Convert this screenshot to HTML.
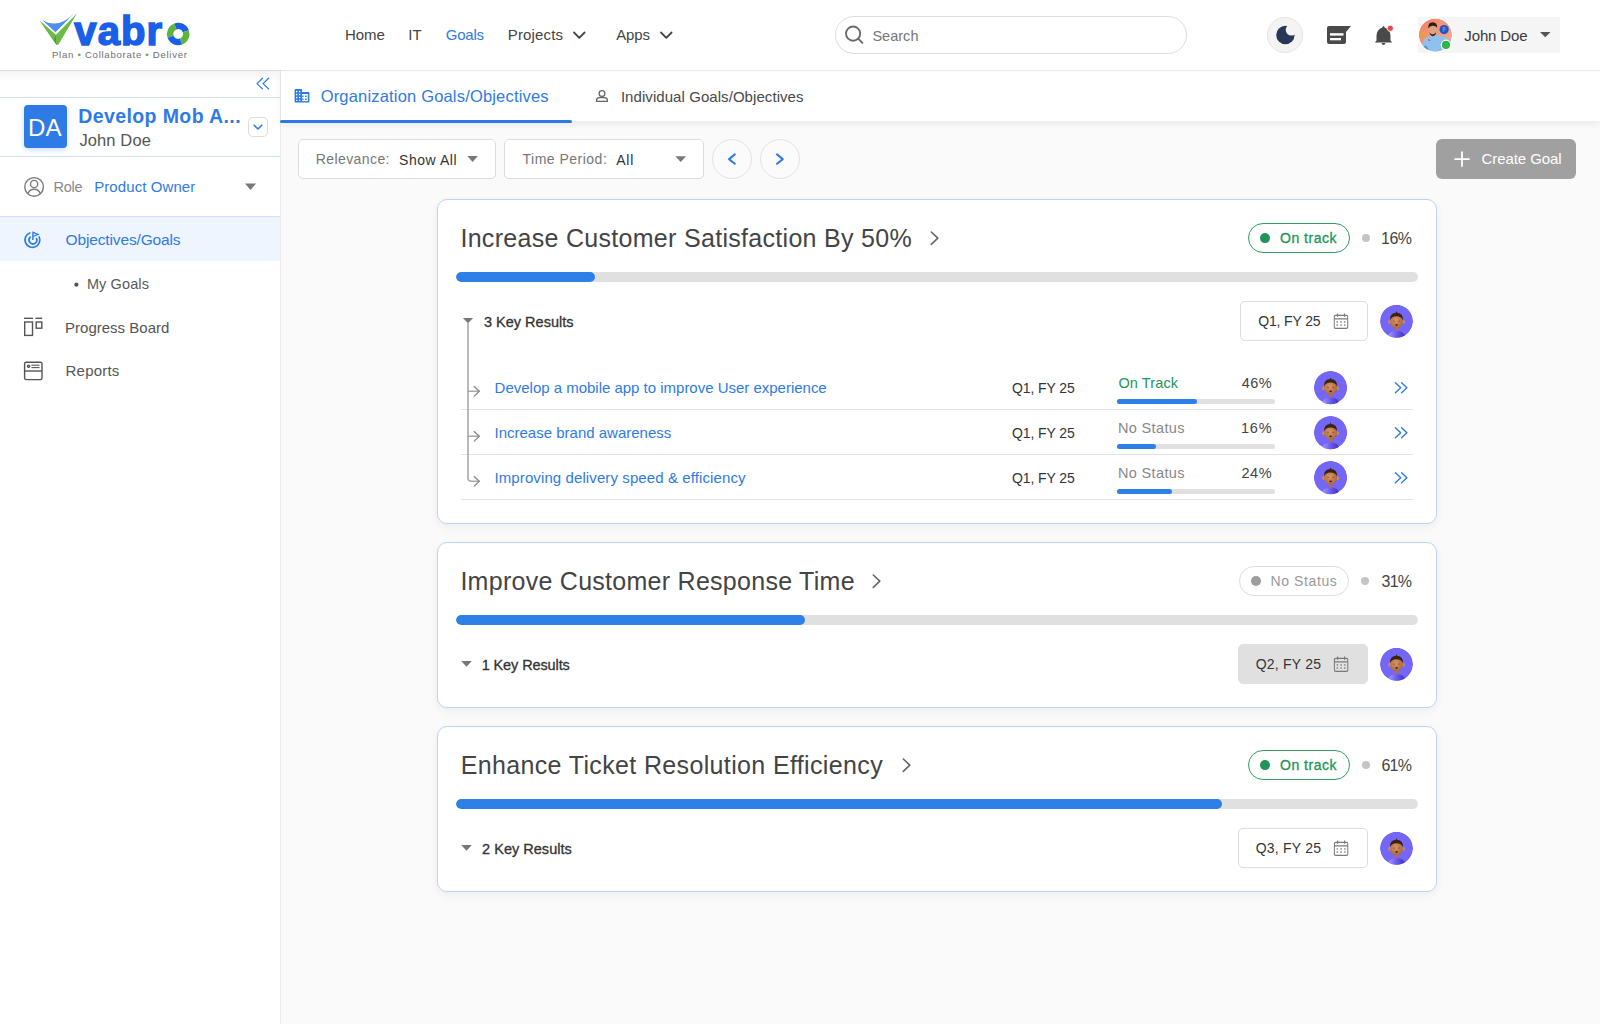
<!DOCTYPE html>
<html><head><meta charset="utf-8"><title>Goals</title>
<style>
*{margin:0;padding:0;box-sizing:border-box;}
html,body{width:1600px;height:1024px;overflow:hidden;background:#fafafa;font-family:"Liberation Sans",sans-serif;}
.a{position:absolute;}
.t{position:absolute;line-height:0;white-space:nowrap;z-index:6;}
svg{position:absolute;overflow:visible;}
#hdr{position:absolute;left:0;top:0;width:1600px;height:70px;background:#fff;box-shadow:0 1px 1px rgba(0,0,0,0.09);z-index:3;}
#side{position:absolute;left:0;top:70px;width:281px;height:954px;background:#fff;border-right:1px solid #ebebeb;z-index:1;}
#tabs{position:absolute;left:281px;top:70px;width:1319px;height:51px;background:#fff;box-shadow:0 3px 7px rgba(0,0,0,0.07);z-index:2;}
.card{position:absolute;left:437px;width:1000px;background:#fff;border:1px solid #bcd3f2;border-radius:10px;box-shadow:0 3px 8px rgba(0,0,0,0.06);}
.bar{position:absolute;left:456px;width:962px;height:10px;border-radius:5px;background:#e0e0e0;overflow:hidden;}
.bar i{position:absolute;left:0;top:0;height:10px;border-radius:5px;background:#2f7fe8;}
.mbar{position:absolute;left:1117px;width:158px;height:5px;border-radius:3px;background:#e0e0e0;}
.mbar i{position:absolute;left:0;top:0;height:5px;border-radius:3px;background:#2f7fe8;}
.box{position:absolute;background:#fff;border:1px solid #dcdcdc;border-radius:5px;}
.pill{position:absolute;height:30px;border-radius:15px;background:#fff;}
.dot{position:absolute;border-radius:50%;}
.sep{position:absolute;left:461px;width:952px;height:1px;background:#e2e2e2;}

</style></head><body>
<div id="hdr"></div>
<div id="side"></div>
<div id="tabs"></div>
<div class="a" style="left:0;top:70px;width:280px;height:12px;background:linear-gradient(rgba(0,0,0,0.045),rgba(0,0,0,0));z-index:2"></div>
<!-- header boxes -->
<div class="a" style="left:835px;top:16px;width:352px;height:38px;border:1px solid #dedede;border-radius:19px;background:#fff;z-index:4"></div>
<div class="a" style="left:1267px;top:17px;width:36px;height:36px;border:1px solid #e3e3e3;border-radius:50%;background:#f4f4f5;z-index:4"></div>
<div class="a" style="left:1418px;top:17px;width:142px;height:36px;background:#f5f5f5;z-index:4"></div>
<!-- sidebar -->
<div class="a" style="left:0;top:97px;width:280px;height:1px;background:#cfe0fa;z-index:2"></div>
<div class="a" style="left:24px;top:105px;width:43px;height:43px;background:#2f7be6;border-radius:4px;box-shadow:0 2px 5px rgba(47,123,230,0.25);z-index:2"></div>
<div class="a" style="left:248px;top:117px;width:20px;height:20px;border:1px solid #dcdcdc;border-radius:5px;background:#fff;z-index:2"></div>
<div class="a" style="left:0;top:156px;width:280px;height:1px;background:#cfe0fa;z-index:2"></div>
<div class="a" style="left:0;top:216px;width:280px;height:1px;background:#cfe0fa;z-index:2"></div>
<div class="a" style="left:0;top:217px;width:280px;height:44px;background:#eef5fe;z-index:2"></div>
<!-- tab underline -->
<div class="a" style="left:280px;top:119.5px;width:292px;height:3px;background:#2f7be6;border-radius:2px;z-index:4"></div>
<!-- filters -->
<div class="box" style="left:298px;top:139px;width:198px;height:40px;"></div>
<div class="box" style="left:504px;top:139px;width:200px;height:40px;"></div>
<div class="a" style="left:712px;top:139px;width:40px;height:40px;border:1px solid #e3e3e3;border-radius:50%;background:#fbfbfb"></div>
<div class="a" style="left:760px;top:139px;width:40px;height:40px;border:1px solid #e3e3e3;border-radius:50%;background:#fbfbfb"></div>
<div class="a" style="left:1436px;top:139px;width:140px;height:40px;border-radius:6px;background:#a0a0a0"></div>
<!-- cards -->
<div class="card" style="top:199px;height:325px"></div>
<div class="card" style="top:542px;height:166px"></div>
<div class="card" style="top:726px;height:166px"></div>
<!-- pills -->
<div class="pill" style="left:1248px;top:223px;width:102px;border:1px solid #2e9d5f"></div>
<div class="pill" style="left:1239px;top:566px;width:110px;border:1px solid #dddddd"></div>
<div class="pill" style="left:1248px;top:750px;width:102px;border:1px solid #2e9d5f"></div>
<!-- progress bars -->
<div class="bar" style="top:272px"><i style="width:139px"></i></div>
<div class="bar" style="top:615px"><i style="width:349px"></i></div>
<div class="bar" style="top:799px"><i style="width:766px"></i></div>
<!-- date boxes -->
<div class="box" style="left:1240px;top:301px;width:128px;height:40px"></div>
<div class="box" style="left:1238px;top:644px;width:130px;height:40px;background:#e0e0e0;border-color:#e0e0e0"></div>
<div class="box" style="left:1238px;top:828px;width:130px;height:40px"></div>
<!-- row separators & mini bars -->
<div class="sep" style="top:409px"></div>
<div class="sep" style="top:454px"></div>
<div class="sep" style="top:499px"></div>
<div class="mbar" style="top:398.5px"><i style="width:80px"></i></div>
<div class="mbar" style="top:443.5px"><i style="width:39px"></i></div>
<div class="mbar" style="top:488.5px"><i style="width:55px"></i></div>
<svg style="left:0;top:0;z-index:5" width="1600" height="1024" viewBox="0 0 1600 1024">
<defs>
  <linearGradient id="body" x1="0" x2="1" y1="0" y2="0"><stop offset="0" stop-color="#a99bff"/><stop offset="0.5" stop-color="#6a5cf0"/><stop offset="1" stop-color="#3c2fb8"/></linearGradient>
  <radialGradient id="face" cx="0.45" cy="0.45" r="0.6"><stop offset="0" stop-color="#d99766"/><stop offset="1" stop-color="#a8653b"/></radialGradient>
  <clipPath id="avc"><circle cx="17" cy="17" r="17"/></clipPath>
  <symbol id="av" viewBox="0 0 34 34">
    <g clip-path="url(#avc)">
      <circle cx="17" cy="17" r="17" fill="#7466f7"/>
      <ellipse cx="17" cy="33.6" rx="9" ry="6.6" fill="url(#body)"/>
      <rect x="15.2" y="22" width="3.6" height="5" fill="#b86d3e"/>
      <circle cx="10.3" cy="17.6" r="2" fill="#d08a55"/>
      <circle cx="23.7" cy="17.6" r="2" fill="#d08a55"/>
      <ellipse cx="17" cy="16.8" rx="6.6" ry="7.4" fill="url(#face)"/>
      <path d="M10.3,15.8 Q10,8.4 17,8.2 Q24,8.4 23.7,15.8 Q22,12 17,11.8 Q12,12 10.3,15.8 Z" fill="#3a2214"/>
      <path d="M16.3,8.4 L17.1,6.4 L17.9,8.4" fill="#3a2214"/>
      <path d="M15.6,20.4 Q17.1,19.6 18.6,20.4 Q18,21.8 17.1,21.8 Q16.2,21.8 15.6,20.4 Z" fill="#3a1a10"/>
      <path d="M13.5,17 Q14.5,16.4 15.5,17" stroke="#5a2e18" stroke-width="0.5" fill="none"/><path d="M18.7,17 Q19.7,16.4 20.7,17" stroke="#5a2e18" stroke-width="0.5" fill="none"/>
    </g>
  </symbol>
  <marker id="none"/>
  <mask id="moonm"><rect x="1260" y="10" width="50" height="50" fill="#fff"/><circle cx="1291.5" cy="29.8" r="5.8" fill="#000"/></mask>
  <linearGradient id="salmon" x1="0" y1="0" x2="1" y2="1"><stop offset="0" stop-color="#f07e60"/><stop offset="1" stop-color="#f5b39a"/></linearGradient>
  <clipPath id="uav"><circle cx="1435.4" cy="35" r="16.6"/></clipPath>
</defs>

<!-- ===== LOGO ===== -->
<path d="M42.2,19.9 Q58,29.8 74.1,13.3 L55.5,32.2 Z" fill="#4f8ef0"/>
<path d="M40.1,21.1 L55.8,34.9 L57.2,44.7 L56.3,44.7 Z" fill="#4f9a34"/>
<path d="M40.1,21.1 L55.8,34.9 L53.5,40.5 Z" fill="#6cbb45"/>
<path d="M55.8,34.9 L77,13.3 L58.3,44.7 L56.3,44.7 Z" fill="#6cbb45"/>
<text x="74.3" y="44.6" font-family="Liberation Sans" font-weight="700" font-size="40" fill="#1a5fe8" stroke="#1a5fe8" stroke-width="1.5" letter-spacing="1.1">vabr</text>
<g fill="none" stroke-width="6.4">
  <path d="M170.59,36.77 A8.1,8.1 0 0 1 175.43,26.39" stroke="#5db53f"/>
  <path d="M175.43,26.39 A8.1,8.1 0 0 1 185.81,31.23" stroke="#1a5fe8"/>
  <path d="M185.81,31.23 A8.1,8.1 0 0 1 180.97,41.61" stroke="#5db53f"/>
  <path d="M180.97,41.61 A8.1,8.1 0 0 1 170.59,36.77" stroke="#1a5fe8"/>
</g>
<text x="52" y="57.5" font-family="Liberation Sans" font-size="9.6" fill="#6f6f6f" letter-spacing="0.72">Plan <tspan fill="#5db53f">•</tspan> Collaborate <tspan fill="#5db53f">•</tspan> Deliver</text>

<!-- ===== HEADER ICONS ===== -->
<g fill="none" stroke="#444" stroke-width="1.8" stroke-linecap="round" stroke-linejoin="round">
  <polyline points="574,32.5 579.3,37.8 584.6,32.5"/>
  <polyline points="661,32.5 666.3,37.8 671.6,32.5"/>
</g>
<g fill="none" stroke="#6b6b6b" stroke-width="1.9" stroke-linecap="round">
  <circle cx="853.1" cy="33.6" r="7.1"/>
  <line x1="858.4" y1="38.9" x2="862.4" y2="42.9"/>
</g>
<circle cx="1285.4" cy="35" r="9.2" fill="#283758" mask="url(#moonm)"/>
<path d="M1329,26 L1351,26 L1346,32 L1346,42 Q1346,44 1344,44 L1329,44 Q1327,44 1327,42 L1327,28 Q1327,26 1329,26 Z" fill="#4a4a4a"/>
<rect x="1330" y="33.2" width="13.5" height="2.4" fill="#fff"/>
<rect x="1330" y="38" width="11" height="2.3" fill="#fff"/>
<path d="M1383.5,26 Q1384.5,26 1384.6,27.5 Q1390.5,29.5 1390.5,36 L1390.5,40.5 L1392.2,42.5 L1374.8,42.5 L1376.5,40.5 L1376.5,36 Q1376.5,29.5 1382.4,27.5 Q1382.5,26 1383.5,26 Z" fill="#4a4a4a"/>
<path d="M1381.5,43 L1385.5,43 Q1385,45 1383.5,45 Q1382,45 1381.5,43 Z" fill="#4a4a4a"/>
<circle cx="1390.3" cy="28.3" r="3.1" fill="#e5484d" stroke="#fff" stroke-width="0.8"/>
<!-- user avatar -->
<circle cx="1435.4" cy="34.9" r="17.9" fill="#fff"/>
<g clip-path="url(#uav)">
  <circle cx="1435.4" cy="35" r="16.6" fill="url(#salmon)"/>
  <path d="M1420,52 Q1421,39 1430,35.5 L1436,35 Q1446,36.5 1452,42 L1452,52 Z" fill="#90c0ec"/>
  <path d="M1424,46 Q1427,44 1429,52 L1424,52 Z" fill="#5f8fc8"/>
  <ellipse cx="1432.6" cy="29.6" rx="3.8" ry="4.6" fill="#d7a486"/>
  <path d="M1428.3,28.5 Q1427.8,22.2 1432.8,22.2 Q1437.4,22.4 1437.2,27.8 Q1435.5,25.5 1432.6,25.8 Q1429.8,26 1428.3,28.5 Z" fill="#2b1d17"/>
  <path d="M1429.6,32.2 Q1432.6,37 1436,32.2 Q1435.8,35.8 1432.8,36.2 Q1430,35.8 1429.6,32.2 Z" fill="#2b1d17"/>
  <path d="M1419.5,33 Q1423,31 1426.5,33.5 L1423.5,37.5 Z" fill="#e9a13a"/>
  <path d="M1428,38.5 L1430.5,40.5 L1428.8,41.2 Z" fill="#e0402a"/>
  <circle cx="1444.1" cy="29.6" r="4.6" fill="#1b55d6"/>
  <rect x="1442.6" y="27" width="2.8" height="1.6" fill="#f2643a"/>
  <rect x="1442.6" y="28.6" width="1.5" height="1.6" fill="#9b5cf6"/>
  <rect x="1444.1" y="28.6" width="1.4" height="1.6" fill="#18b4f0"/>
  <rect x="1442.6" y="30.2" width="1.5" height="1.7" fill="#1fc16b"/>
</g>
<circle cx="1446" cy="44.9" r="4.7" fill="#2db64a" stroke="#fff" stroke-width="1.2"/>
<path d="M1540,32 L1550.5,32 L1545.25,37.3 Z" fill="#555"/>

<!-- ===== SIDEBAR ICONS ===== -->
<g fill="none" stroke="#2f7be6" stroke-width="1.3" stroke-linecap="round" stroke-linejoin="round">
  <polyline points="262.5,78.3 257,83.6 262.5,88.9"/>
  <polyline points="268.6,78.3 263.1,83.6 268.6,88.9"/>
  <polyline points="254.2,125.2 258,129 261.8,125.2" stroke-width="1.6"/>
</g>
<g fill="none" stroke="#7a7a7a" stroke-width="1.4">
  <circle cx="34.1" cy="186.9" r="9.3"/>
  <circle cx="34.1" cy="184" r="3.6"/>
  <path d="M27.8,193.8 Q29.5,189.3 34.1,189.3 Q38.7,189.3 40.4,193.8"/>
</g>
<path d="M245,183.6 L256,183.6 L250.5,190.1 Z" fill="#777"/>
<g fill="none" stroke="#2f7be6" stroke-width="1.7" stroke-linecap="round">
  <path d="M29.8,233 A7.4,7.4 0 1 0 39.2,237"/>
  <path d="M30.2,237.2 A3.9,3.9 0 1 0 36.6,238.6"/>
</g>
<path d="M32.3,231.2 L39.8,234.4 L33.6,236.8 L33.6,240 L32.1,240 Z" fill="#2f7be6"/>
<path d="M33.6,233.4 L36.5,234.4 L33.6,235.4 Z" fill="#eef5fe"/>
<circle cx="76.4" cy="284.7" r="2.1" fill="#555"/>
<g fill="none" stroke="#555" stroke-width="1.4">
  <line x1="24" y1="318.3" x2="33" y2="318.3"/>
  <line x1="35.5" y1="318.3" x2="42.2" y2="318.3"/>
  <rect x="24.7" y="322" width="7.8" height="13.4"/>
  <rect x="36.2" y="322" width="5.6" height="6.2"/>
</g>
<g fill="none" stroke="#555" stroke-width="1.4">
  <rect x="24.6" y="362.2" width="17.4" height="17.4" rx="1.5"/>
  <line x1="24.6" y1="371" x2="42" y2="371"/>
  <circle cx="28.6" cy="366.2" r="1.1"/>
  <line x1="31.5" y1="365.2" x2="39.5" y2="365.2" stroke-width="1.1"/>
  <line x1="31.5" y1="367.6" x2="39.5" y2="367.6" stroke-width="1.1"/>
</g>

<!-- ===== TABS ICONS ===== -->
<path d="M295.4,89.1 L301.4,89.1 Q302.1,89.1 302.1,89.8 L302.1,92.1 L308.6,92.1 Q309.4,92.1 309.4,92.9 L309.4,101.7 Q309.4,102.5 308.6,102.5 L295.4,102.5 Q294.6,102.5 294.6,101.7 L294.6,89.9 Q294.6,89.1 295.4,89.1 Z" fill="#2f7be6"/>
<g fill="#fff">
  <rect x="296" y="90.8" width="1.4" height="1.4" rx="0.5"/><rect x="299" y="90.8" width="1.4" height="1.4" rx="0.5"/>
  <rect x="296" y="93.8" width="1.4" height="1.4" rx="0.5"/><rect x="299" y="93.8" width="1.4" height="1.4" rx="0.5"/>
  <rect x="296" y="96.8" width="1.4" height="1.4" rx="0.5"/><rect x="299" y="96.8" width="1.4" height="1.4" rx="0.5"/>
  <rect x="296" y="99.7" width="1.4" height="1.4" rx="0.5"/><rect x="299" y="99.7" width="1.4" height="1.4" rx="0.5"/>
  <rect x="302.1" y="94" width="5.7" height="7.1"/>
</g>
<g fill="#2f7be6">
  <rect x="302.1" y="95.6" width="1.5" height="1.4"/><rect x="302.1" y="98.6" width="1.5" height="1.4"/>
  <rect x="305" y="95.4" width="1.7" height="1.7" rx="0.4"/><rect x="305" y="98.4" width="1.7" height="1.7" rx="0.4"/>
</g>
<g fill="none" stroke="#666" stroke-width="1.3">
  <circle cx="602" cy="93.6" r="2.9"/>
  <path d="M596.6,101.4 L596.6,100.3 Q596.6,97.6 599.5,97.6 L604.5,97.6 Q607.4,97.6 607.4,100.3 L607.4,101.4 Z"/>
</g>

<!-- ===== FILTER ICONS ===== -->
<path d="M467.4,156 L477.8,156 L472.6,162 Z" fill="#777"/>
<path d="M675.4,156.2 L686,156.2 L680.7,162 Z" fill="#777"/>
<g fill="none" stroke="#2f7be6" stroke-width="2" stroke-linecap="round" stroke-linejoin="round">
  <polyline points="734.8,154.4 729,159.1 734.8,163.8"/>
  <polyline points="777,154.4 782.8,159.1 777,163.8"/>
</g>
<g stroke="#fff" stroke-width="1.8" stroke-linecap="round">
  <line x1="1455" y1="159.1" x2="1469" y2="159.1"/>
  <line x1="1462" y1="152.2" x2="1462" y2="166"/>
</g>

<!-- ===== CARD ICONS ===== -->
<g fill="none" stroke="#666" stroke-width="1.6" stroke-linecap="round" stroke-linejoin="round">
  <polyline points="931.3,232 937.8,238.2 931.3,244.4"/>
  <polyline points="873.3,575 879.8,581.2 873.3,587.4"/>
  <polyline points="903.3,759 909.8,765.2 903.3,771.4"/>
</g>
<circle cx="1265" cy="238.1" r="5" fill="#22945a"/>
<circle cx="1256" cy="581" r="5" fill="#9e9e9e"/>
<circle cx="1265" cy="765.1" r="5" fill="#22945a"/>
<circle cx="1366" cy="238" r="4" fill="#c4c4c4"/>
<circle cx="1365" cy="581" r="4" fill="#c4c4c4"/>
<circle cx="1366" cy="765" r="4" fill="#c4c4c4"/>
<path d="M462.9,318 L473.1,318 L468,323.2 Z" fill="#777"/>
<path d="M461.2,661 L471.8,661 L466.5,666.7 Z" fill="#777"/>
<path d="M461.2,845.1 L471.8,845.1 L466.5,850.7 Z" fill="#777"/>
<!-- calendars -->
<symbol id="cal" viewBox="0 0 15 16">
  <g fill="none" stroke="#7a7a7a" stroke-width="1.2">
    <rect x="0.7" y="2.2" width="13.6" height="13.1" rx="1.6"/>
    <line x1="0.7" y1="5.8" x2="14.3" y2="5.8"/>
    <line x1="4" y1="0.3" x2="4" y2="3.6"/><line x1="11" y1="0.3" x2="11" y2="3.6"/>
  </g>
  <g fill="#7a7a7a">
    <rect x="3" y="8.2" width="1.5" height="1.3"/><rect x="6.75" y="8.2" width="1.5" height="1.3"/><rect x="10.5" y="8.2" width="1.5" height="1.3"/>
    <rect x="3" y="11.3" width="1.5" height="1.3"/><rect x="6.75" y="11.3" width="1.5" height="1.3"/><rect x="10.5" y="11.3" width="1.5" height="1.3"/>
  </g>
</symbol>
<use href="#cal" x="1333.5" y="313.1" width="15" height="16"/>
<use href="#cal" x="1333.6" y="656.1" width="15" height="16"/>
<use href="#cal" x="1333.6" y="840.1" width="15" height="16"/>
<use href="#av" x="1380" y="304.75" width="33" height="33"/>
<use href="#av" x="1380" y="647.75" width="33" height="33"/>
<use href="#av" x="1380" y="831.75" width="33" height="33"/>
<use href="#av" x="1313.9" y="370.9" width="33.3" height="33.3"/>
<use href="#av" x="1313.9" y="415.9" width="33.3" height="33.3"/>
<use href="#av" x="1313.9" y="460.9" width="33.3" height="33.3"/>
<!-- tree -->
<g fill="none" stroke="#a8a8a8" stroke-width="1.6" stroke-linecap="round" stroke-linejoin="round">
  <path d="M468,323 L468,478 Q468,481.3 471.3,481.3 L479.2,481.3"/>
  <line x1="468" y1="391.3" x2="479.2" y2="391.3"/>
  <line x1="468" y1="436.3" x2="479.2" y2="436.3"/>
</g>
<g fill="none" stroke="#8a8a8a" stroke-width="1.3" stroke-linecap="round" stroke-linejoin="round">
  <polyline points="474.2,386.5 479.3,391.3 474.2,396.1"/>
  <polyline points="474.2,431.5 479.3,436.3 474.2,441.1"/>
  <polyline points="474.2,476.5 479.3,481.3 474.2,486.1"/>
</g>
<g fill="none" stroke="#2f7be6" stroke-width="1.4" stroke-linecap="round" stroke-linejoin="round">
  <polyline points="1395.4,382.65 1400.7,387.75 1395.4,392.85"/><polyline points="1401.6,382.65 1406.9,387.75 1401.6,392.85"/>
  <polyline points="1395.4,427.65 1400.7,432.75 1395.4,437.85"/><polyline points="1401.6,427.65 1406.9,432.75 1401.6,437.85"/>
  <polyline points="1395.4,472.65 1400.7,477.75 1395.4,482.85"/><polyline points="1401.6,472.65 1406.9,477.75 1401.6,482.85"/>
</g>
</svg>

<div class="t" style="top:35px;font-size:15px;color:#444;letter-spacing:-0.057px;left:345.00px;">Home</div>
<div class="t" style="top:35px;font-size:15px;color:#444;letter-spacing:0.233px;left:408.20px;">IT</div>
<div class="t" style="top:35px;font-size:15px;color:#2f7be6;letter-spacing:-0.246px;left:445.80px;">Goals</div>
<div class="t" style="top:35px;font-size:15px;color:#444;letter-spacing:0.145px;left:507.80px;">Projects</div>
<div class="t" style="top:35px;font-size:15px;color:#444;letter-spacing:-0.163px;left:616.25px;">Apps</div>
<div class="t" style="top:36px;font-size:14.5px;color:#777;letter-spacing:0.024px;left:872.40px;">Search</div>
<div class="t" style="top:36px;font-size:15px;color:#3a3a3a;letter-spacing:-0.124px;left:1464.30px;">John Doe</div>
<div class="t" style="top:128px;font-size:24px;color:#fff;letter-spacing:0.368px;left:27.90px;">DA</div>
<div class="t" style="top:116px;font-size:19.5px;color:#2f7be6;font-weight:700;letter-spacing:0.395px;left:78.30px;">Develop Mob A...</div>
<div class="t" style="top:140px;font-size:16.5px;color:#555;letter-spacing:0.121px;left:79.40px;">John Doe</div>
<div class="t" style="top:187px;font-size:14.5px;color:#888;letter-spacing:-0.286px;left:53.50px;">Role</div>
<div class="t" style="top:187px;font-size:15px;color:#2f7be6;letter-spacing:0.088px;left:94.20px;">Product Owner</div>
<div class="t" style="top:240px;font-size:15.5px;color:#2f7be6;letter-spacing:-0.147px;left:65.60px;">Objectives/Goals</div>
<div class="t" style="top:284px;font-size:14.5px;color:#5a5a5a;letter-spacing:0.116px;left:86.90px;">My Goals</div>
<div class="t" style="top:328px;font-size:15px;color:#555;left:65.10px;">Progress Board</div>
<div class="t" style="top:371px;font-size:15px;color:#555;letter-spacing:0.196px;left:65.60px;">Reports</div>
<div class="t" style="top:96px;font-size:16.5px;color:#2f7be6;letter-spacing:0.178px;left:320.70px;">Organization Goals/Objectives</div>
<div class="t" style="top:97px;font-size:15px;color:#484848;letter-spacing:0.065px;left:620.90px;">Individual Goals/Objectives</div>
<div class="t" style="top:159px;font-size:14px;color:#777;letter-spacing:0.417px;left:315.70px;">Relevance:</div>
<div class="t" style="top:160px;font-size:14px;color:#333;letter-spacing:0.549px;left:399.00px;">Show All</div>
<div class="t" style="top:159px;font-size:14px;color:#777;letter-spacing:0.486px;left:522.60px;">Time Period:</div>
<div class="t" style="top:160px;font-size:14px;color:#333;letter-spacing:0.726px;left:616.30px;">All</div>
<div class="t" style="top:159px;font-size:15px;color:#fff;letter-spacing:-0.094px;left:1481.60px;">Create Goal</div>
<div class="t" style="top:238px;font-size:25px;color:#444;letter-spacing:0.301px;left:460.40px;">Increase Customer Satisfaction By 50%</div>
<div class="t" style="top:238px;font-size:14px;color:#22945a;-webkit-text-stroke:0.3px currentColor;letter-spacing:0.514px;left:1280.00px;">On track</div>
<div class="t" style="top:239px;font-size:16px;color:#444;letter-spacing:-0.498px;left:1381.00px;">16%</div>
<div class="t" style="top:322px;font-size:14.5px;color:#333;-webkit-text-stroke:0.3px currentColor;letter-spacing:0.016px;left:483.90px;">3 Key Results</div>
<div class="t" style="top:321px;font-size:14px;color:#333;letter-spacing:-0.140px;left:1258.15px;">Q1, FY 25</div>
<div class="t" style="top:581px;font-size:25px;color:#444;letter-spacing:0.272px;left:460.40px;">Improve Customer Response Time</div>
<div class="t" style="top:581px;font-size:14px;color:#9a9a9a;letter-spacing:0.603px;left:1270.50px;">No Status</div>
<div class="t" style="top:582px;font-size:16px;color:#444;letter-spacing:-0.798px;left:1381.60px;">31%</div>
<div class="t" style="top:665px;font-size:14.5px;color:#333;-webkit-text-stroke:0.3px currentColor;letter-spacing:-0.109px;left:481.70px;">1 Key Results</div>
<div class="t" style="top:664px;font-size:14px;color:#333;letter-spacing:0.235px;left:1255.70px;">Q2, FY 25</div>
<div class="t" style="top:765px;font-size:25px;color:#444;letter-spacing:0.356px;left:460.70px;">Enhance Ticket Resolution Efficiency</div>
<div class="t" style="top:765px;font-size:14px;color:#22945a;-webkit-text-stroke:0.3px currentColor;letter-spacing:0.514px;left:1280.00px;">On track</div>
<div class="t" style="top:766px;font-size:16px;color:#444;letter-spacing:-0.698px;left:1381.40px;">61%</div>
<div class="t" style="top:849px;font-size:14.5px;color:#333;-webkit-text-stroke:0.3px currentColor;letter-spacing:0.016px;left:482.10px;">2 Key Results</div>
<div class="t" style="top:848px;font-size:14px;color:#333;letter-spacing:0.235px;left:1255.70px;">Q3, FY 25</div>
<div class="t" style="top:388px;font-size:15px;color:#2f7be6;letter-spacing:-0.012px;left:494.60px;">Develop a mobile app to improve User experience</div>
<div class="t" style="top:388px;font-size:14px;color:#333;letter-spacing:-0.078px;left:1011.90px;">Q1, FY 25</div>
<div class="t" style="top:383px;font-size:14.5px;color:#22945a;letter-spacing:0.124px;left:1118.40px;">On Track</div>
<div class="t" style="top:383px;font-size:14.5px;color:#444;letter-spacing:0.386px;left:1241.80px;">46%</div>
<div class="t" style="top:433px;font-size:15px;color:#2f7be6;left:494.50px;">Increase brand awareness</div>
<div class="t" style="top:433px;font-size:14px;color:#333;letter-spacing:-0.078px;left:1011.90px;">Q1, FY 25</div>
<div class="t" style="top:428px;font-size:14.5px;color:#888;letter-spacing:0.360px;left:1117.90px;">No Status</div>
<div class="t" style="top:428px;font-size:14.5px;color:#444;letter-spacing:0.786px;left:1241.00px;">16%</div>
<div class="t" style="top:478px;font-size:15px;color:#2f7be6;letter-spacing:0.101px;left:494.50px;">Improving delivery speed &amp; efficiency</div>
<div class="t" style="top:478px;font-size:14px;color:#333;letter-spacing:-0.078px;left:1011.90px;">Q1, FY 25</div>
<div class="t" style="top:473px;font-size:14.5px;color:#888;letter-spacing:0.360px;left:1117.90px;">No Status</div>
<div class="t" style="top:473px;font-size:14.5px;color:#444;letter-spacing:0.586px;left:1241.40px;">24%</div>
</body></html>
